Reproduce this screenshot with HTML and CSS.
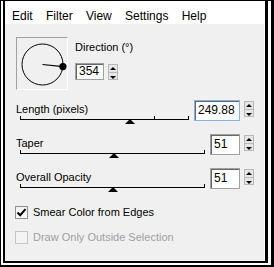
FILE: index.html
```html
<!DOCTYPE html>
<html>
<head>
<meta charset="utf-8">
<link rel="stylesheet" href="styles.css">
</head>
<body>
<div class="frame">
  <div class="window">
    <div class="menubar">
      <span class="menu-item">Edit</span>
      <span class="menu-item">Filter</span>
      <span class="menu-item">View</span>
      <span class="menu-item">Settings</span>
      <span class="menu-item">Help</span>
    </div>
    <div class="content">
      <div class="direction">
        <div class="dial">
          <svg width="50" height="51" viewBox="0 0 50 51">
            <circle cx="25.5" cy="26.5" r="20.5" fill="none" stroke="#000" stroke-width="1"/>
            <line x1="25.5" y1="26.5" x2="45.9" y2="28.6" stroke="#000" stroke-width="1.2"/>
            <circle cx="45.9" cy="28.6" r="3.6" fill="#000"/>
          </svg>
        </div>
        <div class="direction-right">
          <div class="label">Direction (°)</div>
          <div class="num-field">
            <div class="num num-dir">354</div>
            <div class="spin"><span class="spin-btn up"></span><span class="spin-btn down"></span></div>
          </div>
        </div>
      </div>

      <div class="param">
        <div class="param-left">
          <div class="label">Length (pixels)</div>
          <div class="slider">
            <span class="tick tick-start"></span>
            <span class="tick" style="left:79.4%"></span>
            <span class="tick tick-end"></span>
            <span class="thumb" style="left:65.3%"></span>
          </div>
        </div>
        <div class="num-field">
          <div class="num num-wide focused">249.88</div>
          <div class="spin"><span class="spin-btn up"></span><span class="spin-btn down"></span></div>
        </div>
      </div>

      <div class="param">
        <div class="param-left">
          <div class="label">Taper</div>
          <div class="slider">
            <span class="tick tick-start"></span>
            <span class="tick tick-end"></span>
            <span class="thumb" style="left:51%"></span>
          </div>
        </div>
        <div class="num-field">
          <div class="num">51</div>
          <div class="spin"><span class="spin-btn up"></span><span class="spin-btn down"></span></div>
        </div>
      </div>

      <div class="param">
        <div class="param-left">
          <div class="label">Overall Opacity</div>
          <div class="slider">
            <span class="tick tick-start"></span>
            <span class="tick tick-end"></span>
            <span class="thumb" style="left:50.5%"></span>
          </div>
        </div>
        <div class="num-field">
          <div class="num">51</div>
          <div class="spin"><span class="spin-btn up"></span><span class="spin-btn down"></span></div>
        </div>
      </div>

      <div class="checks">
        <label class="check">
          <span class="box checked">
            <svg width="11" height="11" viewBox="0 0 11 11"><path d="M1.5 5.5 L4.2 8.2 L9.5 2.2" fill="none" stroke="#000" stroke-width="2"/></svg>
          </span>
          <span class="check-label">Smear Color from Edges</span>
        </label>
        <label class="check disabled">
          <span class="box"></span>
          <span class="check-label">Draw Only Outside Selection</span>
        </label>
      </div>
    </div>
  </div>
</div>
</body>
</html>
```

FILE: styles.css
```css
html, body {
  margin: 0;
  padding: 0;
  background: #fff;
}

.frame {
  width: 274px;
  height: 267px;
  box-sizing: border-box;
  background: #fff;
  border-style: solid;
  border-color: #000;
  border-width: 1px 3px 2px 1px;
  padding: 0 3px 2px 2px;
}

.window {
  height: 100%;
  box-sizing: border-box;
  border-style: solid;
  border-color: #000;
  border-width: 0 3px 2px 2px;
  background: #f0f0f0;
  display: flex;
  flex-direction: column;
  font-family: "Liberation Sans", Arial, sans-serif;
  font-size: 11px;
  color: #000;
}

.menubar {
  height: 23px;
  background: #fff;
  display: flex;
  gap: 13.3px;
  padding-left: 7px;
  font-size: 12px;
  line-height: 15px;
  box-sizing: border-box;
  padding-top: 8px;
  border-right: 1px solid #fff;
}

.content {
  flex: 1;
  display: flex;
  flex-direction: column;
  border-right: 1px solid #fff;
}

.label {
  line-height: 13px;
  white-space: nowrap;
}

.direction {
  display: flex;
  margin-top: 13px;
  padding-left: 11px;
  height: 53px;
}

.dial {
  width: 52px;
  height: 53px;
  box-sizing: border-box;
  border-style: solid;
  border-width: 1px;
  border-color: #a0a0a0 #fff #fff #a0a0a0;
}

.dial svg {
  display: block;
}

.direction-right {
  margin-left: 7px;
  display: flex;
  flex-direction: column;
}

.direction-right .label {
  margin-top: 4px;
}

.direction-right .num-field {
  margin-top: 9px;
}

.num-field {
  display: flex;
  gap: 4px;
  align-items: flex-start;
}

.num {
  width: 30px;
  height: 21px;
  box-sizing: border-box;
  background: #fff;
  border: 1px solid #a0a0a0;
  box-shadow: inset 1px 1px 0 #696969;
  font-size: 12px;
  line-height: 18px;
  padding-left: 3px;
}

.num-dir {
  width: 29px;
  height: 17px;
  line-height: 15px;
}

.num-wide {
  width: 46px;
}

.num.focused {
  border-color: #7eb4ea;
}

.spin {
  width: 10px;
  height: 16px;
  margin-top: 1px;
  display: flex;
  flex-direction: column;
  box-sizing: border-box;
  border: 1px solid #b8b8b8;
  background: #e6e6e6;
}

.spin-btn {
  flex: 1;
  position: relative;
}

.spin-btn.up {
  border-bottom: 1px solid #b8b8b8;
}

.spin-btn::after {
  content: "";
  position: absolute;
  left: 1px;
  top: 2px;
  border-left: 3px solid transparent;
  border-right: 3px solid transparent;
}

.spin-btn.up::after {
  border-bottom: 3px solid #000;
}

.spin-btn.down::after {
  top: 3px;
  border-top: 3px solid #000;
}

.param {
  display: flex;
  padding-left: 11px;
  padding-right: 10px;
  margin-top: 10px;
  height: 21px;
}

.param + .param {
  margin-top: 13px;
}

.param-left {
  flex: 1;
  display: flex;
  flex-direction: column;
}

.param-left .label {
  margin-top: 3px;
}

.slider {
  position: relative;
  height: 9px;
  margin-left: 4px;
  margin-right: 5px;
  border-bottom: 0;
}

.slider::before {
  content: "";
  position: absolute;
  left: 0;
  right: 0;
  top: 3px;
  height: 1px;
  background: #000;
}

.tick {
  position: absolute;
  top: 0;
  width: 1px;
  height: 3px;
  background: #000;
}

.tick-start {
  left: 0;
}

.tick-end {
  right: 0;
}

.thumb {
  position: absolute;
  top: 3px;
  width: 0;
  height: 0;
  transform: translateX(-50%);
  border-left: 5.5px solid transparent;
  border-right: 5.5px solid transparent;
  border-bottom: 5px solid #000;
}

.checks {
  margin-top: 17px;
  padding-left: 10px;
  display: flex;
  flex-direction: column;
  gap: 12px;
}

.check {
  display: flex;
  align-items: center;
  gap: 5px;
  height: 13px;
}

.box {
  width: 13px;
  height: 13px;
  box-sizing: border-box;
  border: 1px solid #8e8f8f;
  background: linear-gradient(#f0f0f0, #fff);
  display: flex;
  align-items: center;
  justify-content: center;
}

.check-label {
  line-height: 13px;
  white-space: nowrap;
}

.check.disabled .box {
  border-color: #c4c4c4;
  background: #f4f4f4;
}

.check.disabled .check-label {
  color: #a0a0a0;
}
```
